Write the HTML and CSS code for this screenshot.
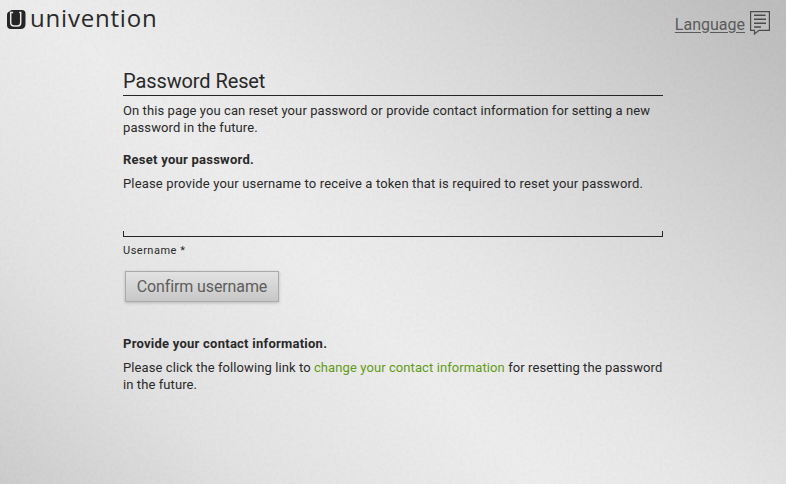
FILE: index.html
```
<!DOCTYPE html>
<html lang="en">
<head>
<meta charset="utf-8">
<title>Password Reset</title>
<link rel="stylesheet" href="styles.css">
</head>
<body>
<svg class="texture" aria-hidden="true">
  <filter id="grain" x="0" y="0" width="100%" height="100%">
    <feTurbulence type="fractalNoise" baseFrequency="0.3" numOctaves="3" seed="4"/>
    <feColorMatrix values="1 0 0 0 0  1 0 0 0 0  1 0 0 0 0  0 0 0 0 1"/>
  </filter>
  <rect width="100%" height="100%" filter="url(#grain)"/>
</svg>
<header class="topbar">
  <div class="brand">
    <svg class="mark" viewBox="0 0 19 20" width="19" height="20">
      <path fill="#252525" d="M5 0h10q3.5 0 3.5 3.5V14q0 5-5 5H4q-4 0-4-4V5q0-3 2.5-3.5Q3.500 0 5 0z"/>
      <path fill="none" stroke="#e8e8e8" stroke-width="1.5" d="M6.200 2.600H3.700V12.500q0 3.500 3.500 3.500h3.300q3.200 0 3.200-3.200V2.600h-1.500"/>
    </svg>
    <span class="wordmark">univention</span>
  </div>
  <div class="language">
    <a class="language-link">Language</a>
    <svg width="20" height="25" viewBox="0 0 20 25" fill="none" stroke="#4b4b4b" stroke-width="1.2">
      <path d="M.6 1.6h18.8v18.8H9L4.5 24v-3.6H.6z"/>
      <path stroke-width="1.5" d="M4 5.2h11.5M4 9.2h12M4 13.2h12M4 17h7"/>
    </svg>
  </div>
</header>
<main class="content">
  <h1>Password Reset</h1>
  <p class="compact">On this page you can reset your password or provide contact information for setting a new<br>password in the future.</p>
  <h2>Reset your password.</h2>
  <p>Please provide your username to receive a token that is required to reset your password.</p>
  <form>
    <input class="field" id="username" type="text">
    <label for="username">Username *</label>
    <button type="button">Confirm username</button>
  </form>
  <h2>Provide your contact information.</h2>
  <p class="compact">Please click the following link to <a class="change">change your contact information</a> for resetting the password<br>in the future.</p>
</main>
</body>
</html>
```
FILE: styles.css
```
* { box-sizing: border-box; }
body {
  margin: 0;
  height: 484px;
  overflow: hidden;
  color: #292929;
  font: 13px/17px Roboto, sans-serif;
  background:
    linear-gradient(44deg, #cccccc 0%, #e3e3e3 20%, #eeeeee 42%, #e9e9e9 54%, #d9d9d9 72%, #c0c0c0 94%, #bcbcbc 100%);
}
.texture {
  position: absolute;
  z-index: -1;
  width: 786px;
  height: 484px;
  opacity: .04;
}
.topbar { display: flex; justify-content: space-between; height: 70px; padding: 10px 16px 0 7px; }
.brand { display: flex; align-items: flex-start; gap: 4px; }
.wordmark { font: 24px/20px "Open Sans", sans-serif; letter-spacing: .8px; margin-top: -2px; color: #292929; }
.language { display: flex; gap: 5px; color: #5b5b5b; }
.language-link { font-size: 16px; line-height: 30px; text-decoration: underline; text-underline-offset: 2px; }
.content { width: 540px; margin-left: 123px; white-space: nowrap; }
h1 { margin: 0 0 6px; height: 26px; border-bottom: 1px solid #252525; font-size: 20px; line-height: 22px; font-weight: 400; letter-spacing: -.1px; }
p { margin: 0; letter-spacing: .15px; }
.compact { letter-spacing: .09px; }
h2 { margin: 15px 0 7px; font-size: 13px; line-height: 17px; font-weight: 700; letter-spacing: .25px; }
form { display: flex; flex-direction: column; align-items: flex-start; height: 128px; }
.field {
  width: 540px;
  height: 45px;
  padding: 0 4px;
  border: 0;
  border-bottom: 1px solid #252525;
  background: linear-gradient(#252525, #252525) left bottom / 1px 5px no-repeat, linear-gradient(#252525, #252525) right bottom / 1px 5px no-repeat;
}
label { margin-top: 5px; font-size: 11px; line-height: 17px; letter-spacing: .5px; }
button {
  margin: 12px 0 0 2px;
  width: 154px;
  height: 31px;
  padding: 0;
  border: 1px solid #aaa;
  background: linear-gradient(#e2e2e2, #c7c7c7);
  box-shadow: 0 1px 3px rgba(0,0,0,.2);
  color: #5d5d5d;
  font: 16px/28px Roboto, sans-serif;
  letter-spacing: -.12px;
}
.change { color: #639b16; }
```
